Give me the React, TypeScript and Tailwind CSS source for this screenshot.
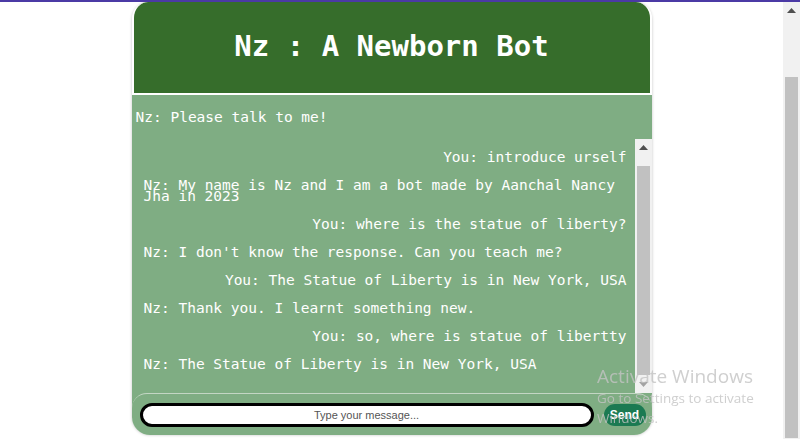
import React from 'react';

const messages = [
  { from: 'You', text: 'introduce urself' },
  { from: 'Nz', text: 'My name is Nz and I am a bot made by Aanchal Nancy Jha in 2023' },
  { from: 'You', text: 'where is the statue of liberty?' },
  { from: 'Nz', text: "I don't know the response. Can you teach me?" },
  { from: 'You', text: 'The Statue of Liberty is in New York, USA' },
  { from: 'Nz', text: 'Thank you. I learnt something new.' },
  { from: 'You', text: 'so, where is statue of libertty' },
  { from: 'Nz', text: 'The Statue of Liberty is in New York, USA' },
];

function UpArrow({ color = '#505050' }: { color?: string }) {
  return (
    <svg width="9" height="5" viewBox="0 0 9 5">
      <path d="M0 5 L4.5 0 L9 5 Z" fill={color} />
    </svg>
  );
}

function DownArrow({ color = '#a3a3a3' }: { color?: string }) {
  return (
    <svg width="9" height="5" viewBox="0 0 9 5">
      <path d="M0 0 L4.5 5 L9 0 Z" fill={color} />
    </svg>
  );
}

export default function App() {
  return (
    <div className="h-screen bg-white font-['DejaVu_Sans_Mono',monospace] overflow-hidden">
      <div className="h-[2px] bg-[#4b3aa5]" />
      <div className="flex h-[437px]">
        {/* page */}
        <div className="flex-1 overflow-hidden">
          <div className="mx-auto w-[520px] rounded-[18px] shadow-[0_0_3px_rgba(0,0,0,0.25)]">
            {/* header */}
            <div className="h-[93px] rounded-t-[16px] border-2 border-t-0 border-white bg-[#366d2b] flex items-center justify-center">
              <h1 className="text-[29px] font-bold text-white pb-[2px]">Nz : A Newborn Bot</h1>
            </div>

            {/* chat */}
            <div className="bg-[#7fad83] rounded-b-[18px]">
              <div className="h-[44px] pl-[4px] pt-[17px] text-[14.5px] leading-[11px] text-white">
                Nz: Please talk to me!
              </div>
              <div className="flex h-[254px]">
                <div className="flex-1 overflow-hidden pt-[13px] pl-[12px] pr-[8px] text-[14.5px] leading-[11px] text-white">
                  {messages.map((m, i) => (
                    <div key={i} className={m.from === 'You' ? 'mb-[17px] text-right' : 'mb-[17px] text-left'}>
                      {m.from}: {m.text}
                    </div>
                  ))}
                </div>
                {/* chat scrollbar */}
                <div className="w-[17px] bg-[#f1f1f1] flex flex-col">
                  <div className="h-[17px] flex items-center justify-center">
                    <UpArrow />
                  </div>
                  <div className="flex-1 pt-[10px] pb-[1px] px-[2px]">
                    <div className="h-full bg-[#c1c1c1]" />
                  </div>
                  <div className="h-[17px] flex items-center justify-center">
                    <DownArrow />
                  </div>
                </div>
              </div>

              {/* input */}
              <div className="h-[42px] rounded-t-[15px] border-t border-[#c3d6c4] flex items-center pl-[8px] pr-[6px] gap-[10px]">
                <input
                  className="w-[454px] h-[24px] rounded-full border-[3px] border-black bg-white text-center text-[11px] font-['Liberation_Sans',Arial,sans-serif] placeholder:text-[#555] outline-none"
                  placeholder="Type your message..."
                />
                <button className="w-[42px] h-[22px] rounded-full bg-[#1b7a52] text-white text-[12px] font-bold font-['Liberation_Sans',Arial,sans-serif]">
                  Send
                </button>
              </div>
            </div>
          </div>
        </div>

        {/* page scrollbar */}
        <div className="w-[17px] bg-[#f1f1f1] flex flex-col">
          <div className="h-[17px] flex items-center justify-center">
            <UpArrow />
          </div>
          <div className="flex-1 pt-[58px] pb-[1px] px-[2px]">
            <div className="h-full bg-[#c1c1c1]" />
          </div>
        </div>
      </div>

      {/* windows activation watermark */}
      <div className="pointer-events-none fixed left-[597px] top-[364px] font-['Open_Sans','Noto_Sans',sans-serif] text-[rgba(195,195,195,0.8)]">
        <div className="text-[19px] leading-[24px]">Activate Windows</div>
        <div className="text-[13.5px] leading-[20px]">Go to Settings to activate</div>
        <div className="text-[13.5px] leading-[20px]">Windows.</div>
      </div>
    </div>
  );
}
